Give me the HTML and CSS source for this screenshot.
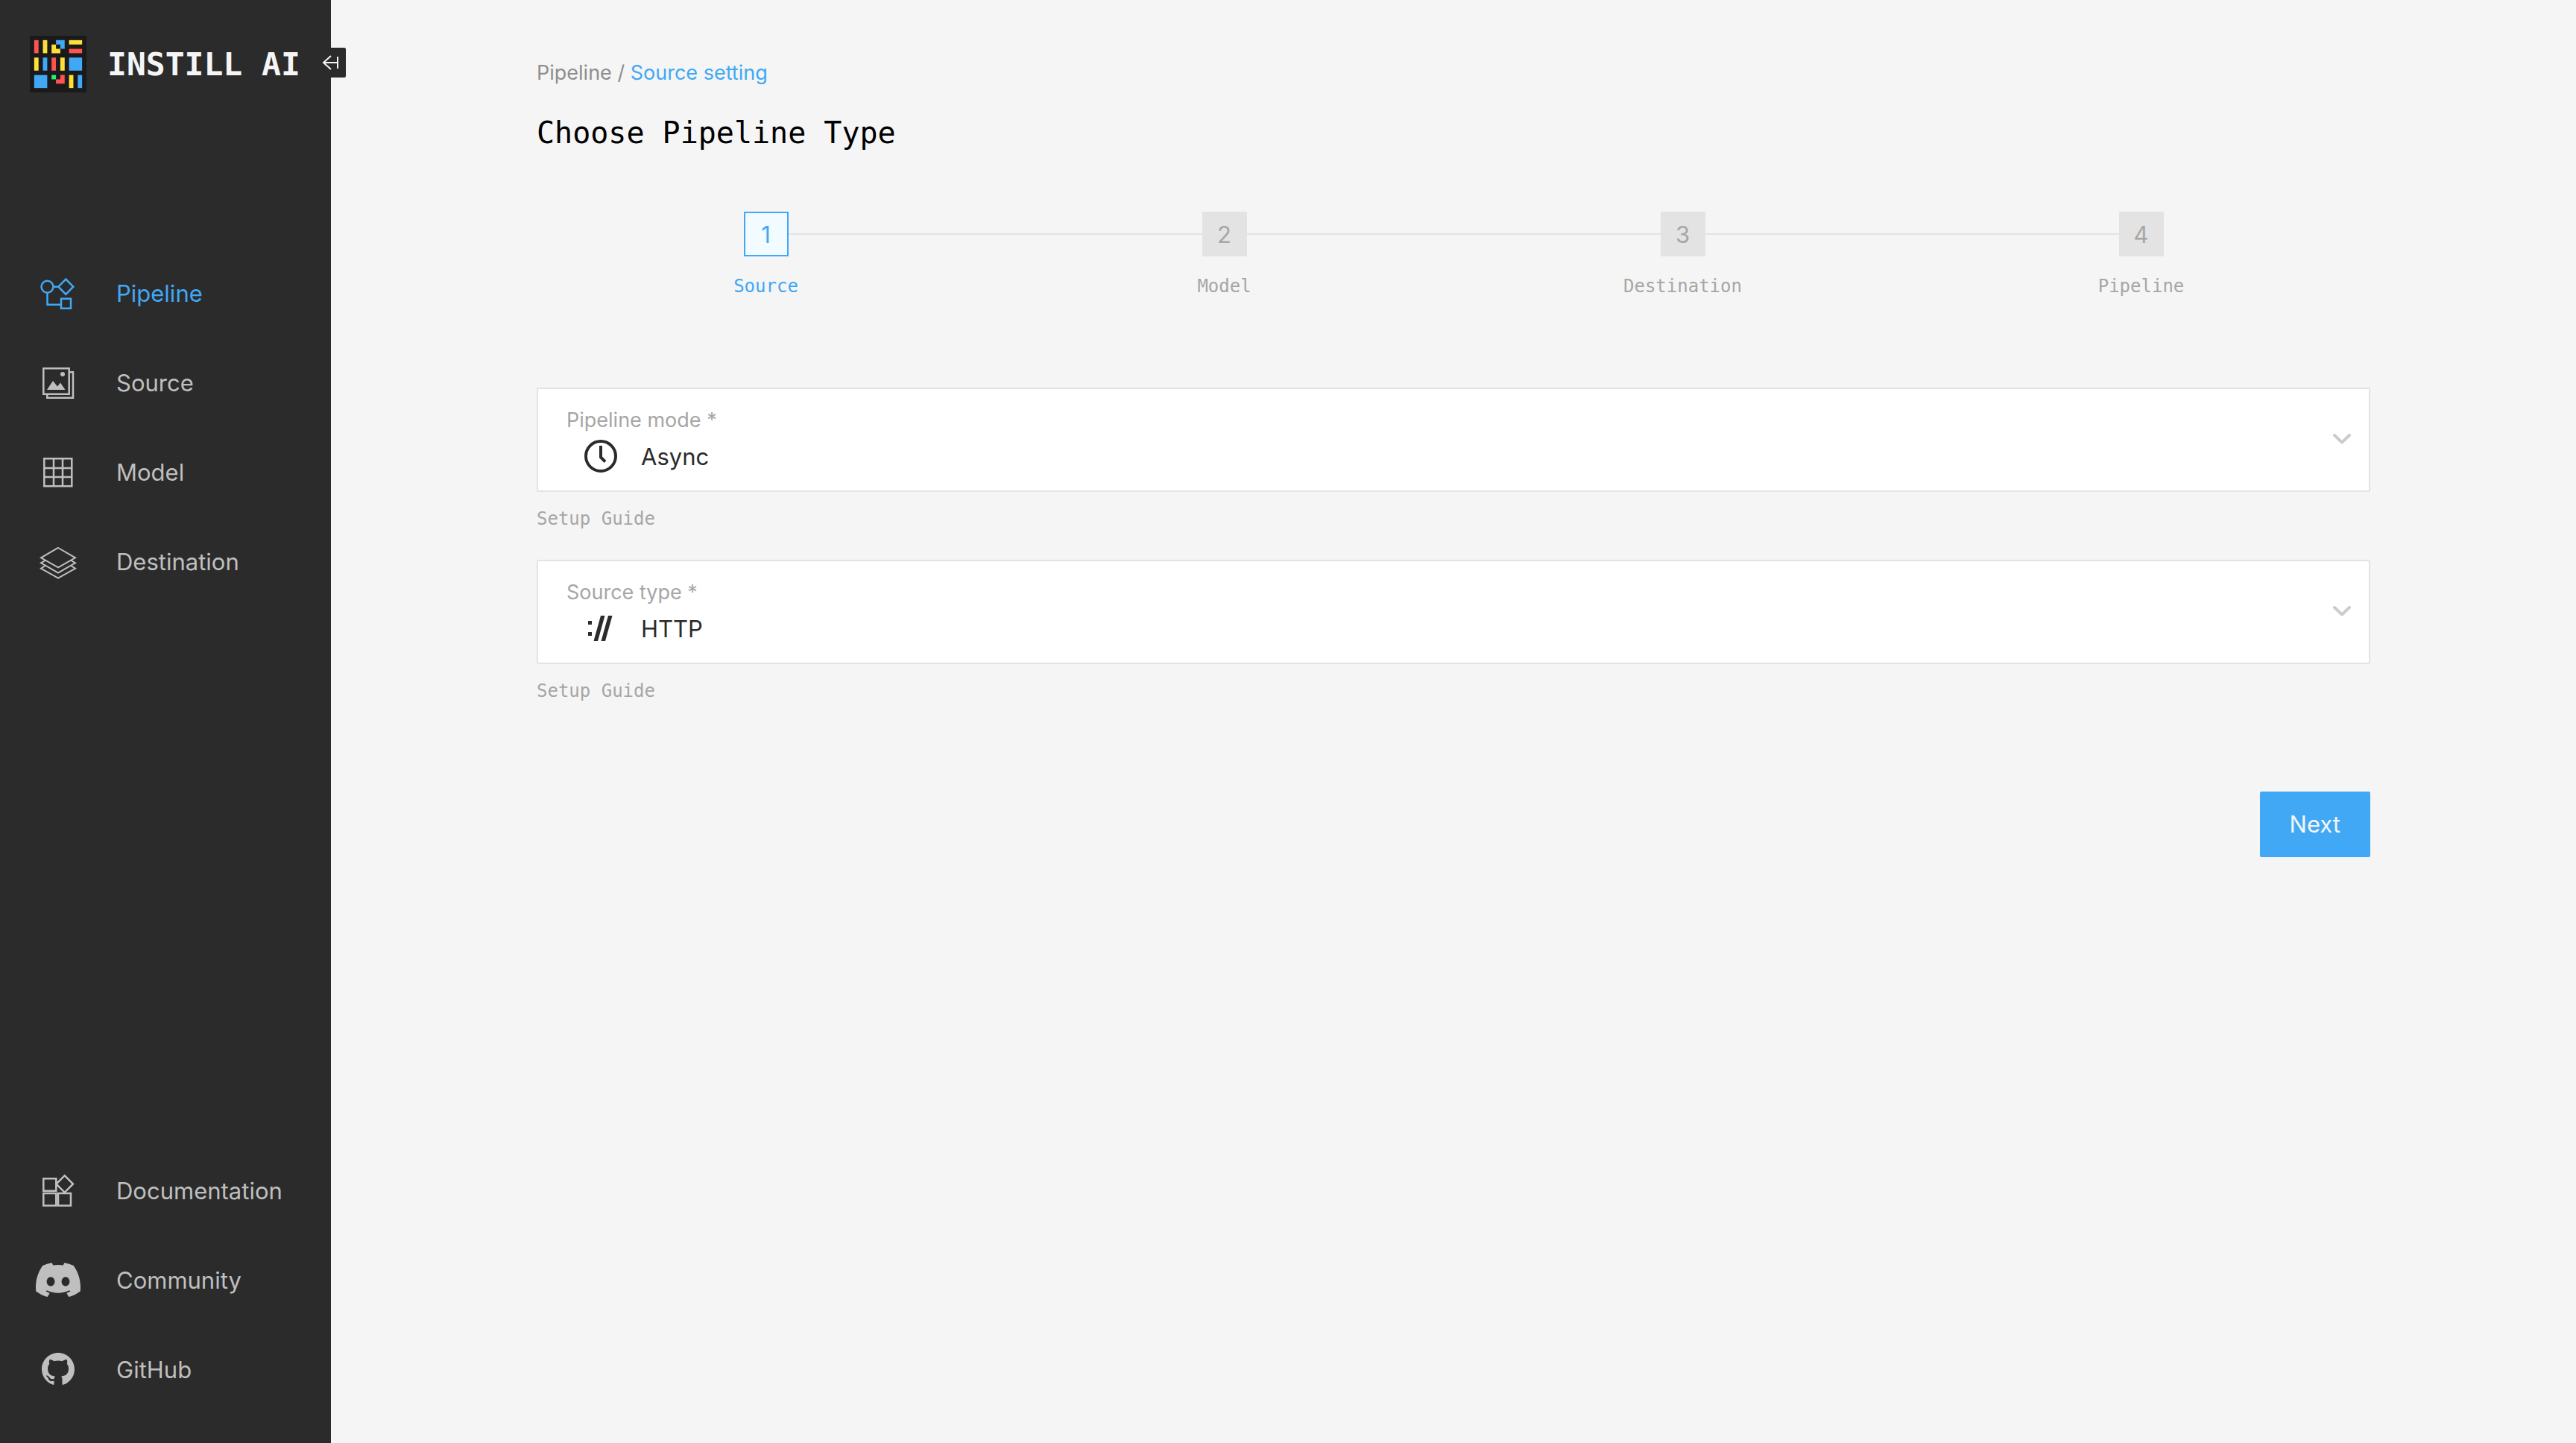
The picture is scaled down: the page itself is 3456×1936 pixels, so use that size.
FILE: index.html
```html
<!DOCTYPE html>
<html lang="en">
<head>
<meta charset="utf-8">
<meta name="viewport" content="width=device-width, initial-scale=1">
<title>Choose Pipeline Type</title>
<link rel="stylesheet" href="styles.css">
</head>
<body>
<div class="app">
  <aside class="sidebar">
    <a class="brand" href="#" aria-label="Instill AI">
      <svg class="brand-mark" viewBox="0 0 13 13" aria-hidden="true">
        <rect width="13" height="13" fill="#1a1a1a"/>
        <g fill="#ff5353">
          <rect x="1" y="1" width="1" height="3"/>
          <rect x="9" y="3" width="3" height="1"/>
          <rect x="5" y="5" width="1" height="3"/>
          <path d="M7 9h1v2h-2v-1h1z"/>
        </g>
        <g fill="#ffdf3a">
          <rect x="3" y="1" width="1" height="3"/>
          <path d="M5 2h1v1h1v1h-2z"/>
          <rect x="9" y="1" width="3" height="1"/>
          <rect x="1" y="5" width="1" height="3"/>
          <rect x="7" y="5" width="1" height="3"/>
          <rect x="9" y="9" width="1" height="3"/>
        </g>
        <g fill="#40a8f5">
          <path d="M6 1h2v2h-1v-1h-1z"/>
          <rect x="3" y="5" width="1" height="3"/>
          <rect x="9" y="5" width="3" height="3"/>
          <rect x="1" y="9" width="3" height="3"/>
          <rect x="11" y="9" width="1" height="3"/>
        </g>
        <rect x="5" y="9" width="1" height="1" fill="#23f07b"/>
      </svg>
      <span class="brand-name">INSTILL AI</span>
    </a>
    <button class="collapse" type="button" aria-label="Collapse sidebar">
      <svg viewBox="0 0 40 40" aria-hidden="true"><path d="M20 11L10 20l10 9M10 20h18M29 12v16"/></svg>
    </button>
    <nav class="nav" aria-label="Main">
      <a class="nav-item active" href="#">
        <svg class="line-icon" viewBox="0 0 60 60" aria-hidden="true"><circle cx="15.500" cy="20.700" r="8"/><path d="M23.500 20.700H30M40.300 10.500l10 10.200-10 10.200-10-10.200zM15.500 28.700V44.700H34M34 36.800h13v13H34z"/></svg>
        <span>Pipeline</span>
      </a>
      <a class="nav-item" href="#">
        <svg class="line-icon" viewBox="0 0 60 60" aria-hidden="true"><path d="M10.300 10.300h34.400v34.400H10.300zM45 15.300h5v34.400H15.300V45"/><g class="solid"><circle cx="36" cy="18" r="3"/><path d="M15 39l8-12 6 7.500 4-5 6.500 9.500z"/></g></svg>
        <span>Source</span>
      </a>
      <a class="nav-item" href="#">
        <svg class="line-icon" viewBox="0 0 60 60" aria-hidden="true"><path d="M11.300 11.300h37v37h-37zM24 11v37M36 11v37M11 24h37M11 36h37"/></svg>
        <span>Model</span>
      </a>
      <a class="nav-item" href="#">
        <svg class="line-icon thin" viewBox="0 0 60 60" aria-hidden="true"><path d="M30 11L53 24.300 30 37.300 7 24.300zM12.500 28L7 31.300 30 44.500 53 31.300 47.500 28M12.500 35L7 38.700 30 51.700 53 38.700 47.500 35"/></svg>
        <span>Destination</span>
      </a>
    </nav>
    <nav class="nav nav-bottom" aria-label="Resources">
      <a class="nav-item" href="#">
        <svg class="line-icon" viewBox="0 0 60 60" aria-hidden="true"><path d="M10.300 13.300h17v16.500h-17zM10.300 33h17v16.500h-17zM30 33h17v16.500H30zM38.700 9.200l11.300 11.300-11.300 11.300-11.300-11.300z"/></svg>
        <span>Documentation</span>
      </a>
      <a class="nav-item" href="#">
        <svg class="fill-icon" viewBox="0 0 71 71" aria-hidden="true"><path transform="translate(0 7)" d="M60.105 4.898A58.550 58.550 0 0 0 45.653.415a.22.22 0 0 0-.233.110 40.784 40.784 0 0 0-1.800 3.697c-5.456-.817-10.886-.817-16.230 0-.485-1.164-1.201-2.587-1.828-3.697a.228.228 0 0 0-.233-.110 58.386 58.386 0 0 0-14.451 4.483.207.207 0 0 0-.095.082C1.578 18.730-.944 32.144.293 45.391a.244.244 0 0 0 .093.167c6.073 4.460 11.955 7.167 17.729 8.962a.230.230 0 0 0 .249-.082 42.080 42.080 0 0 0 3.627-5.900.225.225 0 0 0-.123-.312 38.772 38.772 0 0 1-5.539-2.640.228.228 0 0 1-.022-.378c.372-.279.744-.569 1.100-.862a.220.220 0 0 1 .230-.031c11.619 5.304 24.198 5.304 35.680 0a.219.219 0 0 1 .233.028c.356.293.728.586 1.103.865a.228.228 0 0 1-.020.378 36.384 36.384 0 0 1-5.540 2.637.227.227 0 0 0-.121.315 47.249 47.249 0 0 0 3.624 5.897.225.225 0 0 0 .249.084c5.801-1.794 11.684-4.502 17.757-8.961a.228.228 0 0 0 .092-.164c1.480-15.315-2.480-28.618-10.497-40.412a.180.180 0 0 0-.093-.084zM23.725 37.325c-3.498 0-6.380-3.211-6.380-7.156 0-3.944 2.826-7.156 6.380-7.156 3.583 0 6.438 3.240 6.382 7.156 0 3.945-2.827 7.156-6.381 7.156zm23.592 0c-3.498 0-6.380-3.211-6.380-7.156 0-3.944 2.826-7.156 6.380-7.156 3.582 0 6.437 3.240 6.381 7.156 0 3.945-2.800 7.156-6.381 7.156z"/></svg>
        <span>Community</span>
      </a>
      <a class="nav-item" href="#">
        <svg class="fill-icon" viewBox="0 0 60 60" aria-hidden="true"><path transform="translate(8 7) scale(2.750)" d="M8 0C3.580 0 0 3.580 0 8c0 3.540 2.290 6.530 5.470 7.590.4.070.550-.170.550-.380 0-.190-.010-.820-.010-1.490-2.010.370-2.530-.490-2.690-.940-.090-.230-.480-.940-.820-1.130-.280-.150-.680-.520-.010-.530.630-.010 1.080.580 1.230.820.720 1.210 1.870.870 2.330.660.070-.520.280-.870.510-1.070-1.780-.2-3.640-.890-3.640-3.950 0-.870.310-1.590.820-2.150-.080-.2-.360-1.020.080-2.120 0 0 .670-.210 2.200.820.640-.180 1.320-.270 2-.270s1.360.090 2 .270c1.530-1.040 2.200-.820 2.200-.820.440 1.100.160 1.920.080 2.120.510.560.820 1.270.820 2.150 0 3.070-1.870 3.750-3.650 3.950.290.250.540.730.540 1.480 0 1.070-.010 1.930-.010 2.200 0 .210.150.460.550.380A8.010 8.010 0 0 0 16 8c0-4.420-3.580-8-8-8z"/></svg>
        <span>GitHub</span>
      </a>
    </nav>
  </aside>

  <main class="content">
    <nav class="breadcrumb" aria-label="Breadcrumb"><a href="#">Pipeline</a> / <a class="current" href="#" aria-current="page">Source setting</a></nav>
    <h1 class="title">Choose Pipeline Type</h1>

    <ol class="steps">
      <li class="step current" aria-current="step"><span class="step-number">1</span><span class="step-label">Source</span></li>
      <li class="step"><span class="step-number">2</span><span class="step-label">Model</span></li>
      <li class="step"><span class="step-number">3</span><span class="step-label">Destination</span></li>
      <li class="step"><span class="step-number">4</span><span class="step-label">Pipeline</span></li>
    </ol>

    <form class="form">
      <div class="field">
        <div class="control">
          <select id="mode" class="select"><option>Async</option></select>
          <label class="field-label" for="mode">Pipeline mode *</label>
          <svg class="option-icon" viewBox="0 0 44 44" aria-hidden="true"><circle cx="22" cy="22" r="20" fill="none" stroke="currentColor" stroke-width="4"/><path d="M22 8v15.500l6 6" fill="none" stroke="currentColor" stroke-width="4"/></svg>
          <svg class="chevron" viewBox="0 0 24 14" aria-hidden="true"><path d="M2 2l10 9.500L22 2"/></svg>
        </div>
        <a class="hint" href="#">Setup Guide</a>
      </div>
      <div class="field">
        <div class="control">
          <select id="source" class="select"><option>HTTP</option></select>
          <label class="field-label" for="source">Source type *</label>
          <svg class="option-icon" viewBox="0 0 44 44" aria-hidden="true"><path fill="currentColor" d="M5 12h5v5H5zM5 27h5v5H5zM22 5h5.500L18 39h-5.500zM32 5h5.500L28 39h-5.500z"/></svg>
          <svg class="chevron" viewBox="0 0 24 14" aria-hidden="true"><path d="M2 2l10 9.500L22 2"/></svg>
        </div>
        <a class="hint" href="#">Setup Guide</a>
      </div>
      <button class="next" type="button">Next</button>
    </form>
  </main>
</div>
</body>
</html>
```

FILE: styles.css
```css
:root {
  --blue: #40a8f5;
  --dark: #2b2b2b;
  --paper: #f5f5f5;
  --line: #e3e3e3;
  --muted: #a6a6a6;
  --sans: Inter, "Liberation Sans", sans-serif;
  --mono: "DejaVu Sans Mono", "Liberation Mono", monospace;
}

* { box-sizing: border-box; }

body {
  margin: 0;
  background: var(--paper);
  font-family: var(--sans);
  font-size: 31px;
  line-height: 40px;
}

a { color: inherit; text-decoration: none; }

.app { display: flex; min-height: 100vh; }

/* Sidebar */
.sidebar {
  position: relative;
  flex: 0 0 444px;
  display: flex;
  flex-direction: column;
  padding: 48px 40px 40px;
  background: var(--dark);
  color: #bfbfbf;
}

.brand {
  display: flex;
  align-items: center;
  gap: 28px;
  margin-bottom: 240px;
  color: var(--paper);
}

.brand-mark { width: 76px; height: 76px; flex: none; }

.brand-name {
  font-family: var(--mono);
  font-size: 43px;
  font-weight: 700;
  white-space: nowrap;
}

.collapse {
  position: absolute;
  top: 64px;
  right: -20px;
  width: 40px;
  height: 40px;
  padding: 0;
  border: 0;
  border-radius: 2px;
  background: var(--dark);
  color: var(--paper);
}

.collapse svg {
  display: block;
  fill: none;
  stroke: currentColor;
  stroke-width: 2;
}

.nav { display: flex; flex-direction: column; gap: 60px; padding-left: 8px; }
.nav-bottom { margin-top: auto; padding-bottom: 28px; }

.nav-item { display: flex; align-items: center; gap: 48px; height: 60px; }
.nav-item.active { color: var(--blue); }
.nav-item svg { width: 60px; height: 60px; flex: none; }

.line-icon { fill: none; stroke: currentColor; stroke-width: 2.500; }
.line-icon.thin { stroke-width: 2; }
.line-icon .solid { fill: currentColor; stroke: none; }
.fill-icon { fill: currentColor; }

/* Content */
.content { flex: 1; min-width: 0; padding: 78px 276px; }

.breadcrumb { font-size: 27px; color: #8e8e8e; }
.breadcrumb .current { color: var(--blue); }

.title {
  margin: 36px 0 82px;
  font-family: var(--mono);
  font-size: 40px;
  font-weight: 400;
  line-height: 48px;
  color: #000;
}

/* Stepper */
.steps {
  display: grid;
  grid-template-columns: repeat(4, 1fr);
  margin: 0 0 116px;
  padding: 0;
  list-style: none;
  color: var(--muted);
}

.step {
  display: grid;
  grid-template-columns: 1fr 60px 1fr;
  align-items: center;
  row-gap: 20px;
}

.step::before,
.step::after { content: ""; grid-row: 1; height: 2px; background: var(--line); }
.step::before { grid-column: 1; }
.step::after { grid-column: 3; }
.step:first-child::before,
.step:last-child::after { background: none; }

.step-number {
  grid-column: 2;
  grid-row: 1;
  height: 60px;
  border: 2px solid var(--line);
  background: var(--line);
  line-height: 58px;
  text-align: center;
}

.step-label {
  grid-column: 1 / -1;
  grid-row: 2;
  font-family: var(--mono);
  font-size: 24px;
  text-align: center;
}

.step.current { color: var(--blue); }
.step.current .step-number { border-color: var(--blue); background: #f2fbff; }

/* Form */
.form { display: flex; flex-direction: column; gap: 35px; }

.field { display: flex; flex-direction: column; align-items: flex-start; gap: 16px; }

/* The label and icons share one grid with the select that spans it. */
.control {
  display: grid;
  grid-template-columns: 44px 1fr 24px;
  grid-template-rows: 40px 44px;
  row-gap: 6px;
  align-self: stretch;
  padding: 22px 24px 24px 62px;
  border: 2px solid var(--line);
  border-radius: 2px;
  background: #fff;
}

.select {
  grid-area: 1 / 1 / -1 / -1;
  margin: -22px -24px -24px -62px;
  padding: 46px 60px 0 138px;
  border: 0;
  appearance: none;
  background: none;
  font: inherit;
  color: var(--dark);
}

.field-label {
  grid-area: 1 / 1 / 2 / 3;
  margin-left: -24px;
  font-size: 27px;
  color: var(--muted);
  pointer-events: none;
}

.option-icon {
  grid-area: 2 / 1;
  width: 44px;
  height: 44px;
  color: var(--dark);
  pointer-events: none;
}

.chevron {
  grid-area: 1 / 3 / -1 / 4;
  align-self: center;
  width: 24px;
  height: 14px;
  fill: none;
  stroke: #ccc;
  stroke-width: 4;
  stroke-linecap: round;
  stroke-linejoin: round;
  pointer-events: none;
}

.hint {
  font-family: var(--mono);
  font-size: 24px;
  color: var(--muted);
}

.next {
  align-self: flex-end;
  height: 88px;
  margin-top: 80px;
  padding: 0 40px;
  border: 0;
  border-radius: 2px;
  background: var(--blue);
  font: inherit;
  color: var(--paper);
}
```
